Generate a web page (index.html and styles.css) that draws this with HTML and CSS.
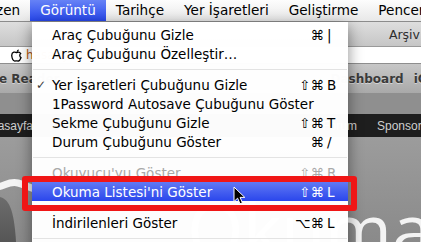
FILE: index.html
```html
<!DOCTYPE html>
<html lang="tr">
<head>
  <meta charset="UTF-8">
  <title>Görüntü menüsü</title>
  <link rel="stylesheet" href="styles.css">
</head>
<body>
  <div class="screen">
    <div class="menubar">
      <span class="mb-item first">Düzen</span>
      <span class="mb-item open">Görüntü</span>
      <span class="mb-item">Tarihçe</span>
      <span class="mb-item">Yer İşaretleri</span>
      <span class="mb-item">Geliştirme</span>
      <span class="mb-item">Pencere</span>
    </div>

    <div class="window">
      <div class="toolbar">
        <span class="title">Arşiv</span>
      </div>
      <div class="address">
        <svg class="favicon" width="11" height="13" viewBox="0 0 11 13">
          <path d="M5.5 3.6 C4.6 3 3.7 2.9 2.8 3.2 C1.2 3.7 0.6 5.4 0.8 7 C1 9 2.2 11.6 3.6 12 C4.4 12.2 4.8 11.8 5.5 11.8 C6.2 11.8 6.6 12.2 7.4 12 C8.5 11.7 9.5 10 10 8.7 C8.6 8 8.3 5.7 9.7 4.6 C9 3.5 7.8 3 6.8 3.3 C6.3 3.4 5.9 3.6 5.5 3.6 Z" fill="none" stroke="#000" stroke-width="1.3"/>
          <path d="M5.6 3.2 C5.6 1.8 6.5 0.8 7.8 0.6 C7.8 1.9 7 3 5.6 3.2 Z" fill="#000"/>
        </svg>
        <span class="url">hasanyalcin.com</span>
      </div>
      <div class="bookmarks">
        <span class="bm first">Google Reader</span>
        <span class="bm-right">
          <span class="bm">Dashboard</span>
          <span class="bm">iGoogle</span>
        </span>
      </div>
      <div class="page-top"></div>
      <div class="page-nav">
        <span class="nav-item first">Anasayfa</span>
        <span class="nav-right">
          <span class="nav-item">Forum</span>
          <span class="nav-item">Sponsorlu</span>
        </span>
      </div>
      <div class="page-body">
        <svg class="wave" width="40" height="105" viewBox="0 0 40 105">
          <defs>
            <linearGradient id="shade" x1="0" y1="0" x2="0" y2="1">
              <stop offset="0" stop-color="#6c6c6c"/>
              <stop offset="1" stop-color="#565656"/>
            </linearGradient>
          </defs>
          <path d="M0 60 C8 62 14 70 16 105 L0 105 Z" fill="url(#shade)"/>
          <path d="M-2 50 C6 48 10 44 18 46 C26 48 30 52 40 53" fill="none" stroke="#f4f4f4" stroke-width="7"/>
        </svg>
        <span class="big">Okuma</span>
      </div>
    </div>

    <div class="menu">
      <div class="item"><span class="check"></span><span class="label">Araç Çubuğunu Gizle</span><span class="mods">⌘</span><span class="key">|</span></div>
      <div class="item"><span class="check"></span><span class="label">Araç Çubuğunu Özelleştir…</span><span class="mods"></span><span class="key"></span></div>
      <div class="sep"></div>
      <div class="item"><span class="check">✓</span><span class="label">Yer İşaretleri Çubuğunu Gizle</span><span class="mods">⇧⌘</span><span class="key">B</span></div>
      <div class="item"><span class="check"></span><span class="label">1Password Autosave Çubuğunu Göster</span><span class="mods"></span><span class="key"></span></div>
      <div class="item"><span class="check"></span><span class="label">Sekme Çubuğunu Gizle</span><span class="mods">⇧⌘</span><span class="key">T</span></div>
      <div class="item"><span class="check"></span><span class="label">Durum Çubuğunu Göster</span><span class="mods">⌘</span><span class="key">/</span></div>
      <div class="sep"></div>
      <div class="item disabled"><span class="check"></span><span class="label">Okuyucu'yu Göster</span><span class="mods">⇧⌘</span><span class="key">R</span></div>
      <div class="item active"><span class="check"></span><span class="label">Okuma Listesi'ni Göster</span><span class="mods">⇧⌘</span><span class="key">L</span></div>
      <div class="sep"></div>
      <div class="item"><span class="check"></span><span class="label">İndirilenleri Göster</span><span class="mods">⌥⌘</span><span class="key">L</span></div>
      <div class="sep"></div>
    </div>

    <svg class="cursor" width="13" height="20" viewBox="0 0 13 20">
      <path d="M1 1 L1 15.5 L4.6 12.2 L7 17.8 L9.4 16.8 L7.1 11.4 L11.8 11.4 Z" fill="#000" stroke="#fff" stroke-width="1" stroke-linejoin="round"/>
    </svg>
  </div>
</body>
</html>
```

FILE: styles.css
```css
* {
  box-sizing: border-box;
}

body {
  margin: 0;
  font-family: "DejaVu Sans", sans-serif;
  font-size: 13.5px;
}

.screen {
  position: relative;
  width: 421px;
  height: 242px;
  overflow: hidden;
  background: #8e8e8e;
}

/* top menu bar */
.menubar {
  height: 22px;
  display: flex;
  background: linear-gradient(#fdfdfd, #e8e8e8);
  border-bottom: 1px solid #8c8c8c;
  overflow: hidden;
  white-space: nowrap;
  font-size: 13.6px;
}

.mb-item {
  padding: 0 10px;
  line-height: 21px;
  color: #000;
}

.mb-item.first {
  margin-left: -33px;
}

.mb-item.open {
  background: linear-gradient(#6682f6, #2747ec);
  color: #fff;
}

/* safari window behind the menu */
.window {
  white-space: nowrap;
}

.toolbar {
  height: 24px;
  display: flex;
  justify-content: flex-end;
  align-items: center;
  background: linear-gradient(#dedede, #c6c6c6);
  overflow: hidden;
}

.title {
  font-size: 12.5px;
  color: #2e2e2e;
  margin-right: 1px;
}

.address {
  height: 17px;
  display: flex;
  align-items: center;
  padding-left: 11px;
  background: #fff;
  border-top: 1px solid #9a9a9a;
  overflow: hidden;
}

.favicon {
  margin-right: 4px;
}

.url {
  font-size: 12px;
  color: #b4570d;
}

.bookmarks {
  height: 30px;
  display: flex;
  align-items: center;
  background: linear-gradient(#c7c7c7, #a9a9a9);
  border-top: 1px solid #8e8e8e;
  overflow: hidden;
  font-size: 12px;
  font-weight: bold;
  color: #3a3a3a;
  text-shadow: 0 1px 0 rgba(255, 255, 255, 0.45);
}

.bm.first {
  margin-left: -40px;
}

.bm-right {
  display: flex;
  gap: 10px;
  margin-left: auto;
  margin-right: -44px;
}

.page-top {
  height: 21px;
  background: #8f8f8f;
}

.page-nav {
  height: 23px;
  display: flex;
  align-items: center;
  background: #1e1e1e;
  overflow: hidden;
  font-family: "Liberation Sans", Arial, sans-serif;
  font-size: 12px;
  color: #cfcfcf;
}

.nav-item.first {
  margin-left: -17px;
}

.nav-right {
  display: flex;
  gap: 20px;
  margin-left: auto;
  margin-right: -10px;
}

.page-body {
  height: 105px;
  display: flex;
  align-items: flex-end;
  background: linear-gradient(#9c9c9c, #8a8a8a);
  overflow: hidden;
}

.wave {
  flex-shrink: 0;
}

.big {
  margin-left: auto;
  margin-right: -11px;
  margin-bottom: -22px;
  font-family: "Open Sans", sans-serif;
  font-size: 72px;
  line-height: 1;
  color: #f3f3f3;
}

/* the open menu */
.menu {
  position: absolute;
  top: 22px;
  left: 32px;
  width: 316px;
  height: 232px;
  padding-top: 3px;
  background: rgba(255, 255, 255, 0.985);
  box-shadow: 0 4px 14px rgba(0, 0, 0, 0.45);
}

.item {
  display: flex;
  align-items: center;
  height: 19px;
  color: #000;
  white-space: nowrap;
}

.check {
  width: 20px;
  padding-left: 4px;
  font-size: 12px;
  color: #3a3a3a;
}

.label {
  flex: 1;
}

.mods {
  text-align: right;
}

.key {
  width: 24px;
  padding-left: 3px;
}

.item.disabled {
  color: #a9a9a9;
}

.item.active {
  position: relative;
  background: linear-gradient(#6179f4, #2a46ec);
  color: #fff;
}

.item.active::after {
  content: "";
  position: absolute;
  left: -10px;
  right: -9px;
  top: -6px;
  bottom: -10px;
  border: 6px solid #f01616;
  border-radius: 3px;
}

.sep {
  height: 12px;
  display: flex;
  align-items: center;
  padding: 0 1px;
}

.sep::before {
  content: "";
  flex: 1;
  height: 1px;
  background: #e3e3e3;
}

.cursor {
  position: absolute;
  left: 233px;
  top: 186px;
}
```
